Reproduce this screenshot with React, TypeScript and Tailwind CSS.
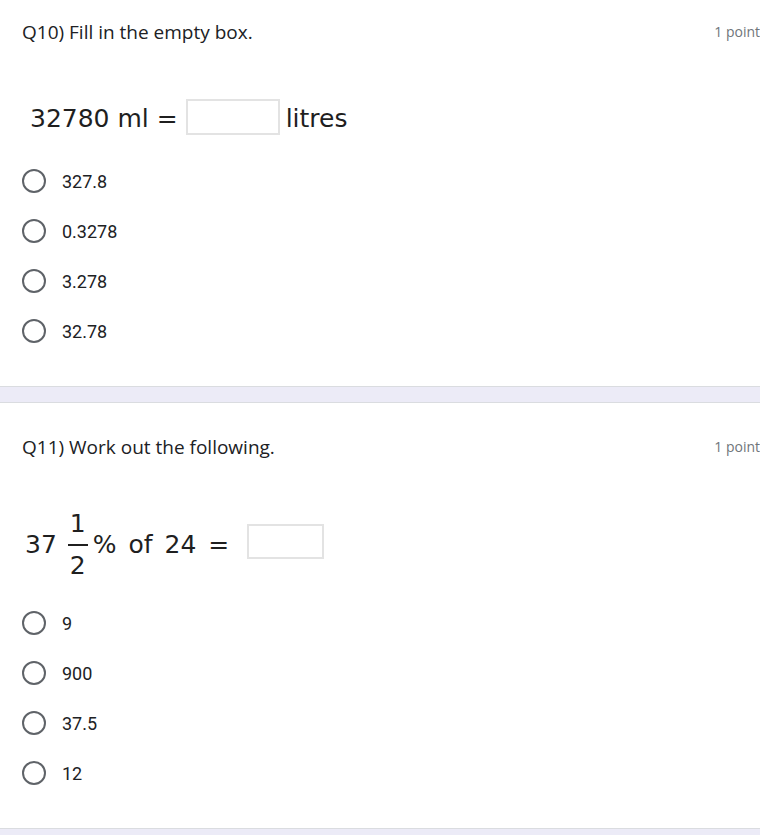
import type { ReactNode } from "react";

const sans = "font-[family-name:'Open_Sans','Liberation_Sans',sans-serif]";
const eq = "font-[family-name:'DejaVu_Sans',Verdana,sans-serif] text-[25px] text-[#1f1f1f]";

function Radio({ label }: { label: string }) {
  return (
    <label className="flex h-[50px] items-center">
      <span className="ml-[22px] h-6 w-6 rounded-full border-2 border-[#5f6368]" />
      <span className="ml-4 font-[family-name:Roboto,'Liberation_Sans',sans-serif] text-[18px] text-[#202124]">
        {label}
      </span>
    </label>
  );
}

function Question({
  title,
  titleTop,
  equation,
  options
}: {
  title: string;
  titleTop: string;
  equation: ReactNode;
  options: string[];
}) {
  return (
    <section className={`border-b border-[#dadce0] bg-white pb-[30px] ${titleTop}`}>
      <div className="flex h-6 items-center justify-between overflow-hidden">
        <h2 className={`pl-[22px] text-[19px] text-[#202124] ${sans}`}>{title}</h2>
        <span className={`whitespace-nowrap text-sm text-[#70757a] ${sans}`}>1 point</span>
      </div>
      {equation}
      <div>
        {options.map((o) => (
          <Radio key={o} label={o} />
        ))}
      </div>
    </section>
  );
}

function Box({ className }: { className: string }) {
  return <span className={`inline-block border-2 border-[#e3e3e3] bg-white ${className}`} />;
}

export default function App() {
  return (
    <div className="h-[835px] w-[760px] overflow-hidden bg-[#ecebf7]">
      <Question
        title="Q10) Fill in the empty box."
        titleTop="pt-5"
        options={["327.8", "0.3278", "3.278", "32.78"]}
        equation={
          <div className={`mb-[21px] mt-[55px] flex h-9 items-center pl-[30px] ${eq}`}>
            <span className="pt-[3px]">32780 ml =</span>
            <Box className="ml-[8px] h-9 w-[94px]" />
            <span className="ml-[6px] pt-[3px]">litres</span>
          </div>
        }
      />
      <div className="h-[16px] border-b border-[#dadce0]" />
      <Question
        title="Q11) Work out the following."
        titleTop="pt-8"
        options={["9", "900", "37.5", "12"]}
        equation={
          <div className={`mb-3 mt-[45px] flex h-[82px] items-center pl-[25px] ${eq}`}>
            <span>37</span>
            <span className="ml-[11px] flex flex-col items-center leading-[40px]">
              <span>1</span>
              <span className="h-[2px] w-[20px] bg-[#1f1f1f]" />
              <span>2</span>
            </span>
            <span className="ml-[5px] [word-spacing:4px]">% of 24 =</span>
            <Box className="mb-2 ml-[18px] h-[35px] w-[77px]" />
          </div>
        }
      />
    </div>
  );
}
